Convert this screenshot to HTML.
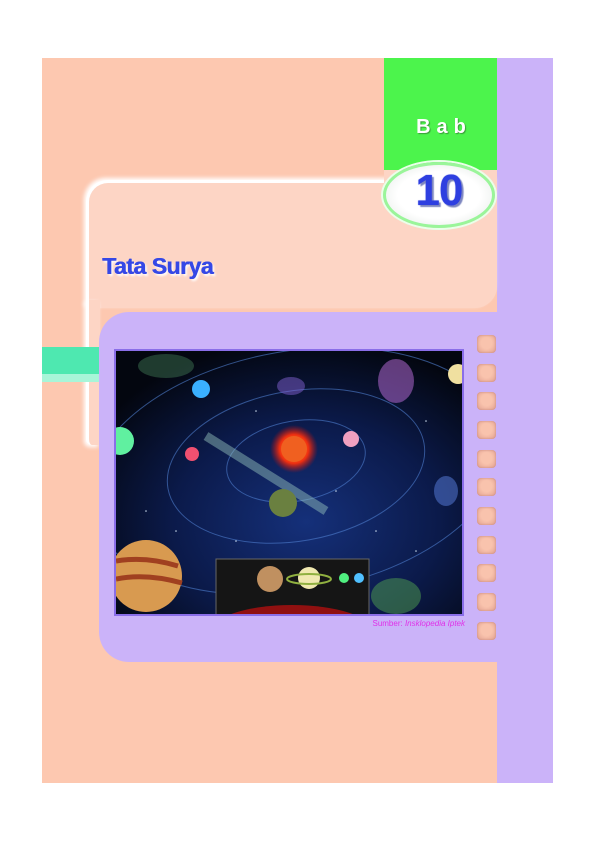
<!DOCTYPE html>
<html><head><meta charset="utf-8"><style>
body{margin:0;width:595px;height:842px;background:#fff;position:relative;overflow:hidden;font-family:"Liberation Sans",sans-serif}
div{position:absolute;box-sizing:border-box}
.sq{left:477px;width:19px;height:18px;border-radius:4px;background:radial-gradient(ellipse at 50% 45%,#f9c3ad 40%,#e0a08f 100%);box-shadow:inset 0 0 2px #c98a80}
</style></head><body>
<div style="left:42px;top:58px;width:511px;height:725px;background:#fdc8b0"></div>
<div style="left:497px;top:58px;width:56px;height:725px;background:#cbb3f9"></div>
<div style="left:384px;top:58px;width:113px;height:120px;background:#4cf44c"></div>
<div style="left:86px;top:180px;width:411px;height:128px;background:#fdd5c5;border-radius:22px 0 22px 0;border-left:3px solid #fff;border-top:3px solid #fff;box-shadow:-2px -2px 4px #fff"></div>
<div style="left:86px;top:300px;width:14px;height:145px;background:#fdd5c5;border-left:3px solid #fff;box-shadow:-2px 2px 4px #fff;border-bottom-left-radius:6px"></div>
<div style="left:384px;top:170px;width:113px;height:138px;background:#fdd5c5;border-bottom-right-radius:22px"></div>
<div style="left:99px;top:312px;width:420px;height:350px;background:#cbb3f9;border-radius:30px 0 0 30px"></div>
<div style="left:42px;top:662px;width:455px;height:121px;background:#fdc8b0;border-top-right-radius:28px"></div>
<div style="left:42px;top:347px;width:57px;height:27px;background:#4ee8b0"></div>
<div style="left:42px;top:374px;width:57px;height:8px;background:#a8f5d8"></div>
<div style="left:404px;top:116px;width:80px;text-align:center;color:#fff;font-weight:bold;font-size:20px;letter-spacing:6px;text-shadow:1px 1px 1px #3a9a3a">Bab</div>
<div style="left:383px;top:162px;width:112px;height:66px;border-radius:50%;background:radial-gradient(ellipse,#fff 55%,#e0e6e2 100%);border:3px solid #9af59a;box-shadow:0 0 0 2px #eaffea"></div>
<div style="left:383px;top:166px;width:112px;text-align:center;color:#2e3fe0;font-weight:900;font-size:44px;text-shadow:2px 2px 1px #7d86c0,0 0 1px #2e3fe0;letter-spacing:-1px">10</div>
<div style="left:102px;top:253px;color:#3548e6;font-weight:bold;font-size:23px;letter-spacing:-0.5px;text-shadow:0.6px 0 0 #3548e6,2px 2px 2px #fff">Tata Surya</div>
<div style="left:114px;top:349px;width:350px;height:267px;border:2px solid #8a6ee8;background:#0c1030;overflow:hidden">
<svg width="346" height="263" viewBox="0 0 346 263">
<defs>
<radialGradient id="bg" cx="55%" cy="65%" r="70%"><stop offset="0" stop-color="#15307a"/><stop offset=".55" stop-color="#0b1a4a"/><stop offset="1" stop-color="#03060f"/></radialGradient>
<radialGradient id="sun" cx="50%" cy="50%" r="50%"><stop offset="0" stop-color="#ffb040"/><stop offset=".6" stop-color="#f03010"/><stop offset="1" stop-color="#c01010" stop-opacity="0"/></radialGradient>
<radialGradient id="bsun" cx="50%" cy="100%" r="60%"><stop offset="0" stop-color="#ffe030"/><stop offset=".6" stop-color="#ff5010"/><stop offset="1" stop-color="#901010"/></radialGradient>
</defs>
<rect width="346" height="263" fill="url(#bg)"/>
<g fill="none" stroke="#4f7fd0" stroke-width="1" opacity=".6">
<ellipse cx="180" cy="110" rx="70" ry="40" transform="rotate(-10 180 110)"/>
<ellipse cx="180" cy="115" rx="130" ry="75" transform="rotate(-10 180 115)"/>
<ellipse cx="180" cy="120" rx="210" ry="120" transform="rotate(-10 180 120)"/>
</g>
<path d="M90 85 L210 160" stroke="#9ac8c0" stroke-width="9" opacity=".45"/>
<circle cx="178" cy="98" r="24" fill="url(#sun)"/>
<circle cx="178" cy="98" r="13" fill="#f06020"/>
<circle cx="85" cy="38" r="9" fill="#3ab0ff"/>
<circle cx="4" cy="90" r="14" fill="#60f0a0"/>
<circle cx="76" cy="103" r="7" fill="#f05070"/>
<circle cx="235" cy="88" r="8" fill="#f0a0c0"/>
<circle cx="167" cy="152" r="14" fill="#6a8040"/>
<circle cx="342" cy="23" r="10" fill="#f0e0a0"/>
<ellipse cx="280" cy="30" rx="18" ry="22" fill="#c070e0" opacity=".5"/>
<ellipse cx="175" cy="35" rx="14" ry="9" fill="#8060d0" opacity=".5"/>
<ellipse cx="50" cy="15" rx="28" ry="12" fill="#3c7050" opacity=".5"/>
<ellipse cx="330" cy="140" rx="12" ry="15" fill="#5a80e0" opacity=".5"/>
<circle cx="30" cy="225" r="36" fill="#d89a50"/>
<path d="M0 210 Q30 205 62 215 M0 228 Q30 222 66 232" stroke="#a04020" stroke-width="5" fill="none"/>
<ellipse cx="280" cy="245" rx="25" ry="18" fill="#50a050" opacity=".5"/>
<rect x="100" y="208" width="153" height="60" fill="#151515" stroke="#666"/>
<ellipse cx="176" cy="280" rx="80" ry="26" fill="url(#bsun)"/>
<circle cx="154" cy="228" r="13" fill="#c09060"/>
<circle cx="193" cy="227" r="11" fill="#f0e8b0"/>
<ellipse cx="193" cy="228" rx="22" ry="5" fill="none" stroke="#90b040" stroke-width="2"/>
<circle cx="228" cy="227" r="5" fill="#50f080"/>
<circle cx="243" cy="227" r="5" fill="#50c0ff"/>
<g fill="#cde">
<circle cx="30" cy="160" r=".8"/><circle cx="120" cy="190" r=".8"/><circle cx="260" cy="180" r=".8"/><circle cx="300" cy="200" r=".8"/><circle cx="220" cy="140" r=".8"/><circle cx="60" cy="180" r=".8"/><circle cx="310" cy="70" r=".8"/><circle cx="140" cy="60" r=".8"/>
</g>
</svg></div>
<div style="left:300px;top:619px;width:165px;text-align:right;color:#e030e8;font-size:8px">Sumber: <i>Insklopedia Iptek</i></div>
<div class="sq" style="top:335px"></div><div class="sq" style="top:364px"></div><div class="sq" style="top:392px"></div><div class="sq" style="top:421px"></div><div class="sq" style="top:450px"></div><div class="sq" style="top:478px"></div><div class="sq" style="top:507px"></div><div class="sq" style="top:536px"></div><div class="sq" style="top:564px"></div><div class="sq" style="top:593px"></div><div class="sq" style="top:622px"></div>
</body></html>
